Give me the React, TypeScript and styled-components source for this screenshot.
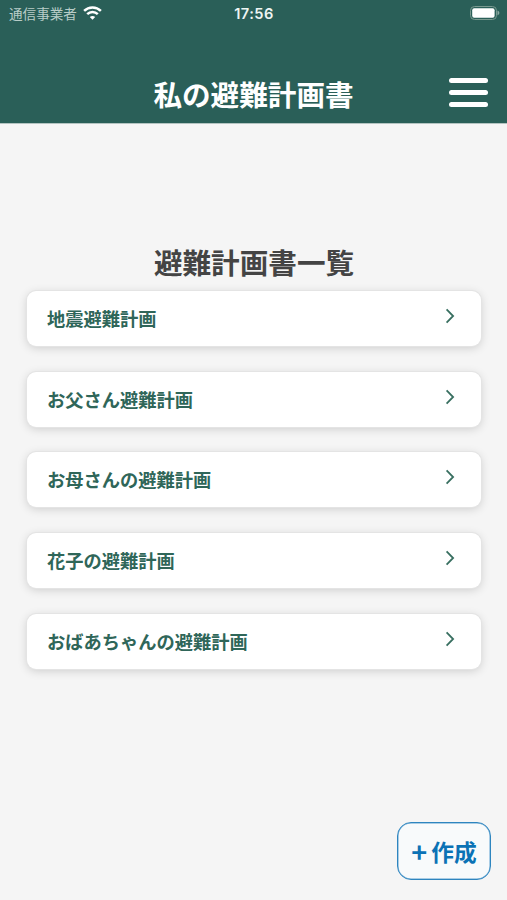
import React from "react";
import styled, { createGlobalStyle } from "styled-components";

const GlobalStyle = createGlobalStyle`
  * { box-sizing: border-box; }
  body {
    margin: 0;
    background: #f5f5f5;
    font-family: "Noto Sans CJK JP", sans-serif;
  }
`;

const Screen = styled.div`
  display: flex;
  flex-direction: column;
  height: 900px;
  background: #f5f5f5;
  overflow: hidden;
`;

const Header = styled.header`
  flex: none;
  height: 124px;
  background: #2a5f58;
  border-bottom: 1px solid #b4c4c1;
  color: #fff;
`;

const StatusBar = styled.div`
  display: grid;
  grid-template-columns: 1fr auto 1fr;
  align-items: center;
  height: 27px;
  padding: 0 8px 0 9px;
`;

const Carrier = styled.div`
  display: flex;
  align-items: center;
  gap: 6px;
  margin-top: -2px;
  font-size: 13.6px;
  line-height: 20px;
  color: #b9cdc8;
`;

const Clock = styled.div`
  font: 600 14.6px/20px Inter, sans-serif;
  letter-spacing: 0.45px;
  color: #eef5f3;
`;

const Battery = styled.svg`
  display: block;
  justify-self: end;
  margin-right: -1px;
  margin-top: -1px;
`;

const NavBar = styled.div`
  display: grid;
  grid-template-columns: 1fr auto 1fr;
  align-items: center;
  height: 60px;
  margin-top: 36px;
  padding: 0 19px;
`;

const Title = styled.h1`
  grid-column: 2;
  margin: 2px 0 0;
  font-size: 28.6px;
  font-weight: 700;
  line-height: 40px;
`;

const MenuButton = styled.button`
  display: flex;
  flex-direction: column;
  justify-self: end;
  gap: 7px;
  width: 39px;
  margin-top: -1px;
  padding: 0;
  border: 0;
  background: none;
`;

const MenuLine = styled.span`
  height: 5px;
  border-radius: 2.5px;
  background: #fff;
`;

const Main = styled.main`
  flex: 1;
  display: flex;
  flex-direction: column;
  padding: 118px 26px 20px 27px;
`;

const Heading = styled.h2`
  margin: 0 0 9.3px;
  font-size: 28.6px;
  font-weight: 700;
  line-height: 40px;
  text-align: center;
  color: #444;
`;

const PlanList = styled.ul`
  display: flex;
  flex-direction: column;
  gap: 25.6px;
  margin: 0;
  padding: 0;
  list-style: none;
`;

const PlanCard = styled.li`
  display: flex;
  align-items: center;
  justify-content: space-between;
  height: 55px;
  padding: 0 24px 0 20px;
  border-radius: 9px;
  background: #fff;
  box-shadow: 0 0 0 1px #e4e4e4, 0 2px 10px rgba(0, 0, 0, 0.17);
`;

const PlanName = styled.span`
  margin-top: -1px;
  font-size: 18.25px;
  font-weight: 700;
  line-height: 28px;
  color: #2f6659;
`;

const Chevron = styled.svg`
  display: block;
  margin-top: -5px;
`;

const CreateButton = styled.button`
  display: flex;
  align-items: center;
  justify-content: center;
  gap: 4px;
  align-self: flex-end;
  width: 94px;
  height: 58px;
  margin-top: auto;
  margin-right: -10px;
  padding: 1px 0 0;
  border: 1px solid #2e85bf;
  border-radius: 14px;
  background: #f8fafb;
  box-shadow: inset 0 0 0 0.5px #5aa0d0;
  color: #0b72b5;
  font: 700 22.7px/32px "Noto Sans CJK JP", sans-serif;
`;

const Plus = styled.span`
  font-size: 27px;
  line-height: 32px;
`;

const plans = [
  "地震避難計画",
  "お父さん避難計画",
  "お母さんの避難計画",
  "花子の避難計画",
  "おばあちゃんの避難計画",
];

const WifiIcon = () => (
  <svg width="19" height="14" viewBox="0 0 19 14" fill="none" stroke="#fff" strokeWidth="2.5">
    <path d="M1.1 4.9C5.8.3 13.2.3 17.9 4.9" />
    <path d="M4.2 8.2c3-2.9 7.6-2.9 10.6 0" />
    <path d="M9.5 13.7 6.8 11c1.5-1.5 3.9-1.5 5.4 0Z" fill="#fff" stroke="none" />
  </svg>
);

const BatteryIcon = () => (
  <Battery width="31" height="14" viewBox="0 0 31 14">
    <rect x="1.5" y=".5" width="26" height="13" rx="4" fill="none" stroke="#78998f" />
    <rect x="3.2" y="2.3" width="22.4" height="9.4" rx="2" fill="#fff" />
    <path d="M28.5 4.6c2.5 1.1 2.5 3.7 0 4.8Z" fill="#8ba9a1" />
  </Battery>
);

export default function App() {
  return (
    <>
      <GlobalStyle />
      <Screen>
        <Header>
          <StatusBar>
            <Carrier>
              通信事業者
              <WifiIcon />
            </Carrier>
            <Clock>17:56</Clock>
            <BatteryIcon />
          </StatusBar>
          <NavBar>
            <Title>私の避難計画書</Title>
            <MenuButton aria-label="メニュー">
              <MenuLine />
              <MenuLine />
              <MenuLine />
            </MenuButton>
          </NavBar>
        </Header>
        <Main>
          <Heading>避難計画書一覧</Heading>
          <PlanList>
            {plans.map((plan) => (
              <PlanCard key={plan}>
                <PlanName>{plan}</PlanName>
                <Chevron width="12" height="16" viewBox="0 0 12 16" fill="none" stroke="#386f60" strokeWidth="1.8">
                  <path d="m1.6 1.4 6.5 6.6-6.5 6.6" />
                </Chevron>
              </PlanCard>
            ))}
          </PlanList>
          <CreateButton>
            <Plus>+</Plus>
            <span>作成</span>
          </CreateButton>
        </Main>
      </Screen>
    </>
  );
}
